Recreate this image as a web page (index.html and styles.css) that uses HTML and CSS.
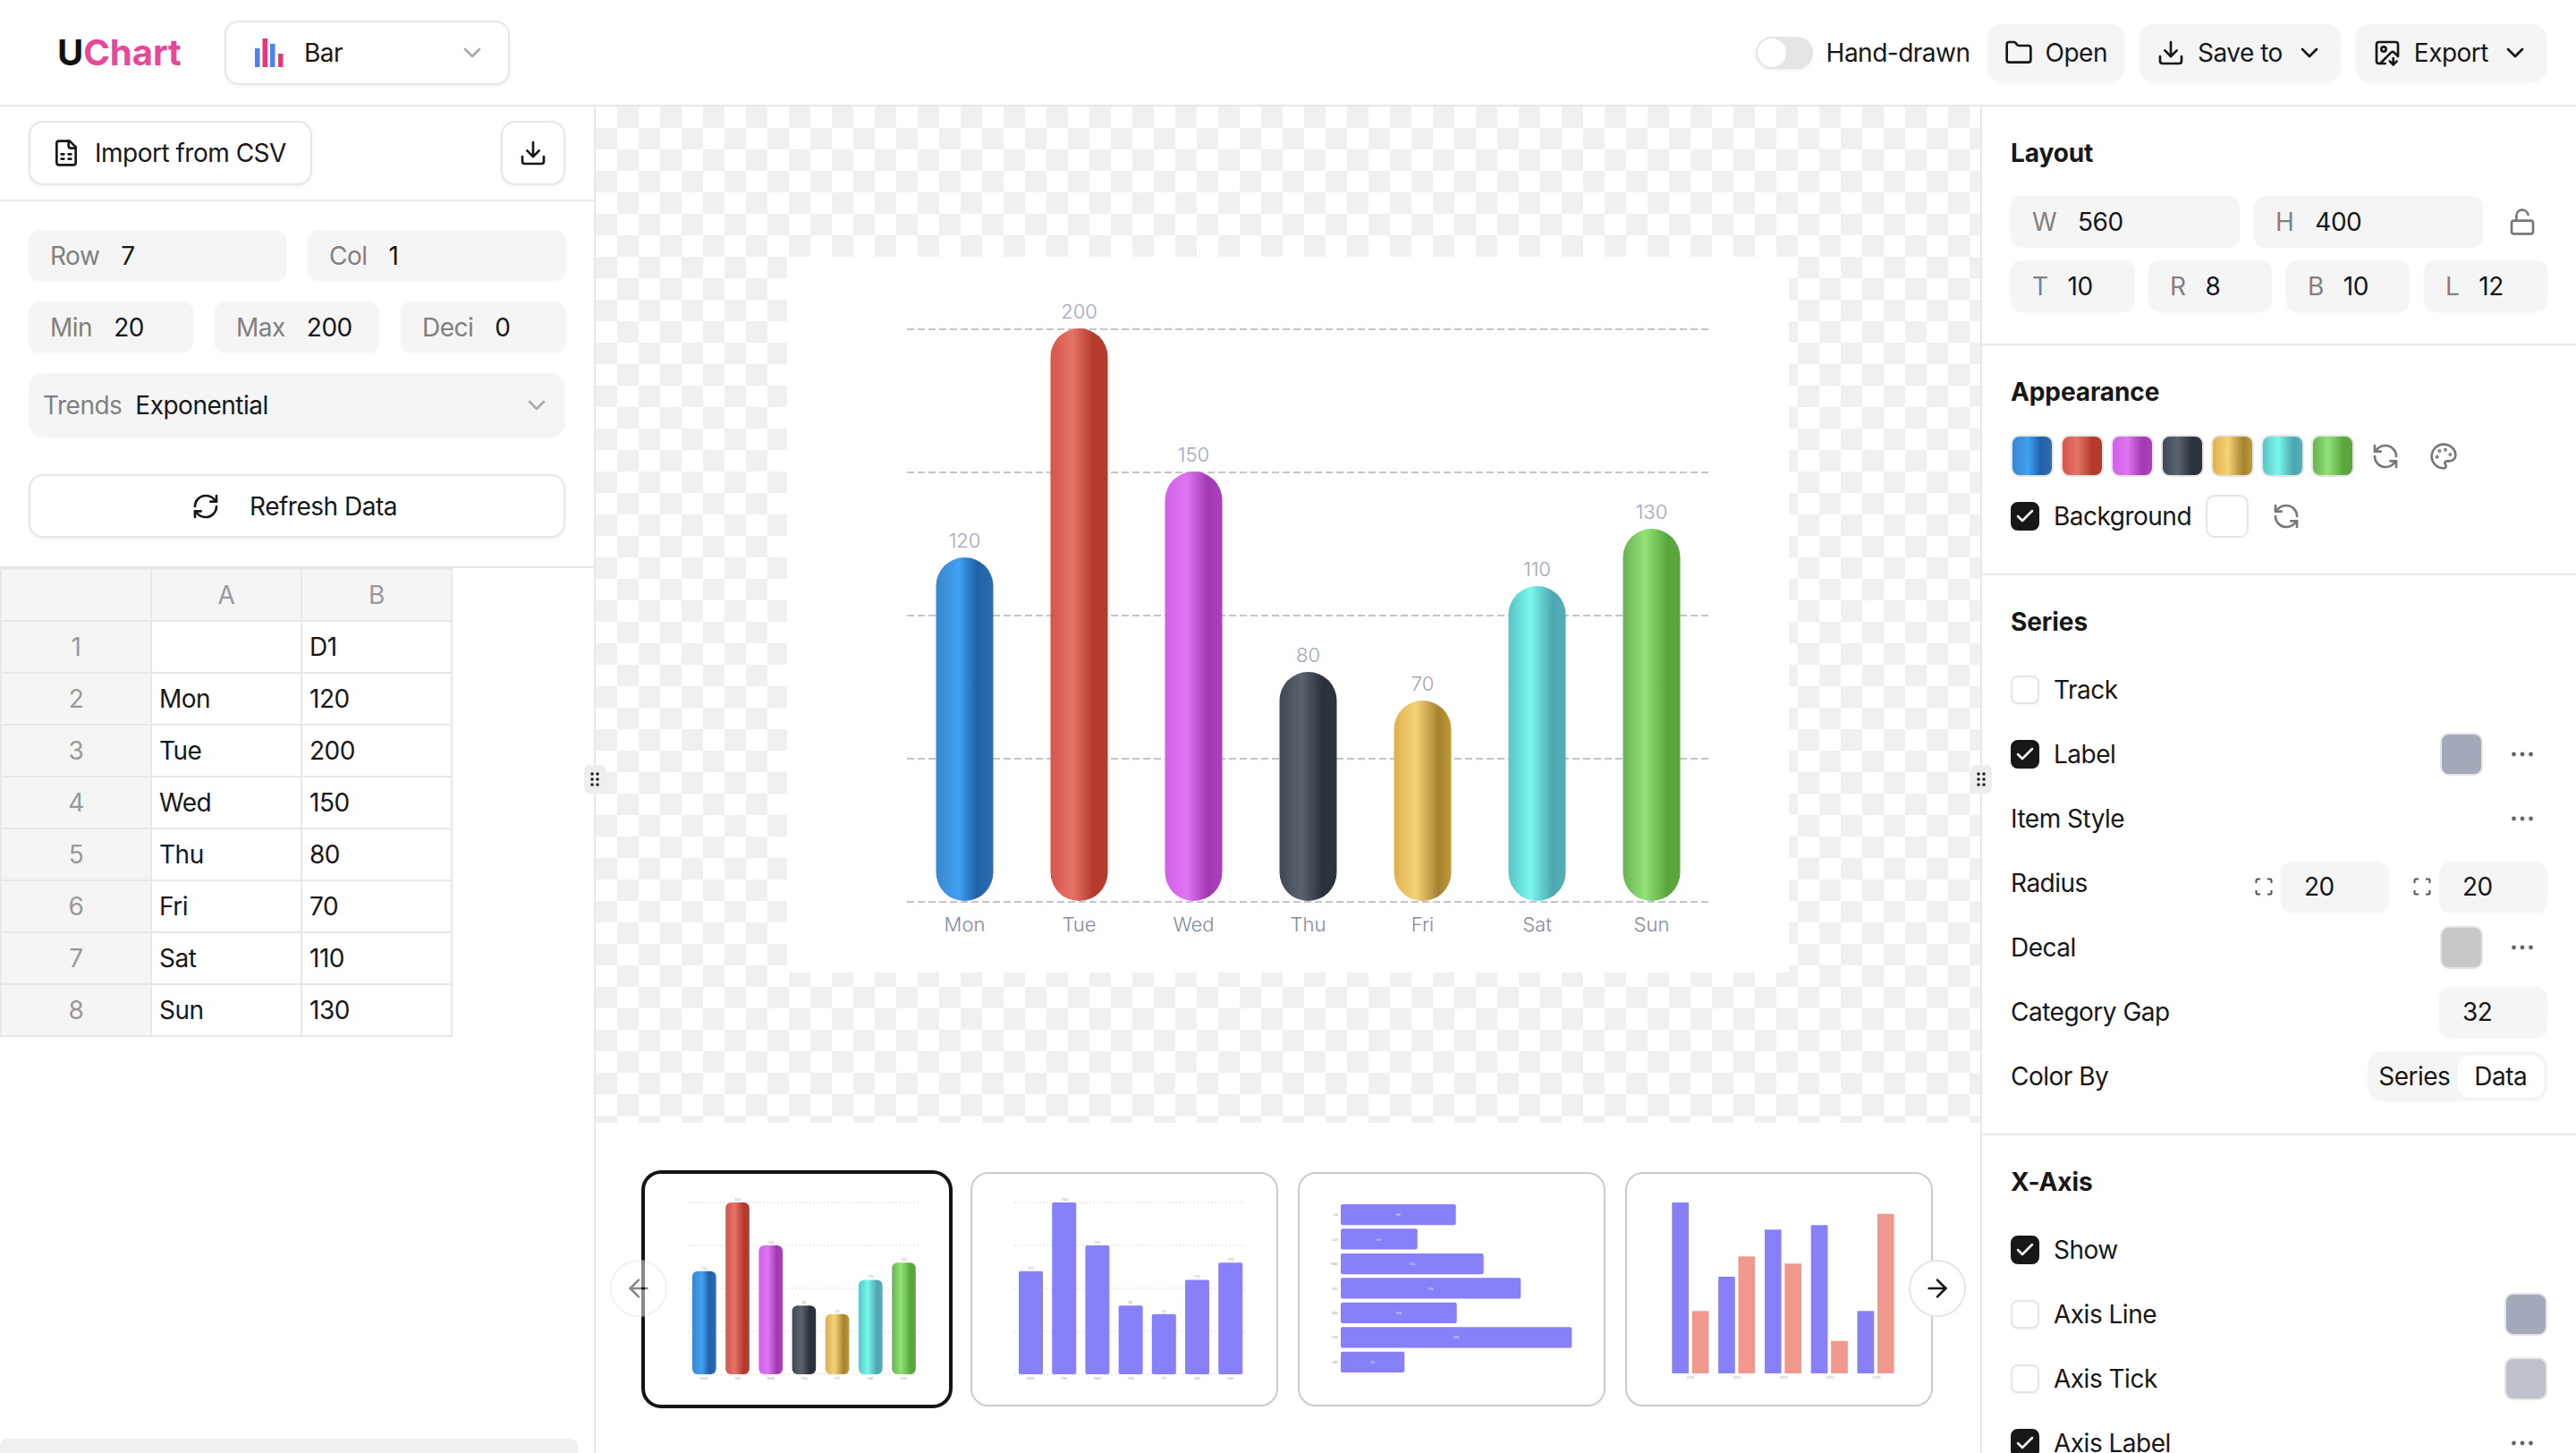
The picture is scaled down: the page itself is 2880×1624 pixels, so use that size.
FILE: index.html
```html
<!DOCTYPE html>
<html lang="en">
<head>
    <meta charset="UTF-8">
    <meta name="viewport" content="width=device-width, initial-scale=1.0">
    <title>UChart</title>
    <link rel="stylesheet" href="styles.css">
</head>
<body>
    <!-- Shared bar gradients -->
    <svg class="defs" width="0" height="0">
        <defs>
            <linearGradient id="g-blue"><stop offset="0" stop-color="#3a86d0"/><stop offset=".4" stop-color="#40a0f2"/><stop offset=".72" stop-color="#2060a8"/><stop offset="1" stop-color="#2c6eb0"/></linearGradient>
            <linearGradient id="g-red"><stop offset="0" stop-color="#d5544a"/><stop offset=".38" stop-color="#e57468"/><stop offset=".75" stop-color="#b43a2c"/><stop offset="1" stop-color="#b83a2d"/></linearGradient>
            <linearGradient id="g-purple"><stop offset="0" stop-color="#d062e6"/><stop offset=".38" stop-color="#df74f3"/><stop offset=".75" stop-color="#a03ab0"/><stop offset="1" stop-color="#ae3fc0"/></linearGradient>
            <linearGradient id="g-dark"><stop offset="0" stop-color="#3f4854"/><stop offset=".38" stop-color="#5b636f"/><stop offset=".75" stop-color="#2a313a"/><stop offset="1" stop-color="#2e343d"/></linearGradient>
            <linearGradient id="g-gold"><stop offset="0" stop-color="#deb04e"/><stop offset=".38" stop-color="#f6d277"/><stop offset=".78" stop-color="#a58230"/><stop offset="1" stop-color="#c09b38"/></linearGradient>
            <linearGradient id="g-teal"><stop offset="0" stop-color="#5ac3c6"/><stop offset=".38" stop-color="#7af8ec"/><stop offset=".78" stop-color="#4da5b0"/><stop offset="1" stop-color="#52b0b8"/></linearGradient>
            <linearGradient id="g-green"><stop offset="0" stop-color="#6ab055"/><stop offset=".38" stop-color="#92e277"/><stop offset=".78" stop-color="#58a53c"/><stop offset="1" stop-color="#5aa83c"/></linearGradient>
        </defs>
    </svg>

    <div class="app">
        <!-- Top bar -->
        <header class="topbar">
            <div class="logo">U<span>Chart</span></div>
            <div class="type-select">
                <svg class="bar-icon" viewBox="0 0 32 32" width="32" height="32">
                    <rect x="0" y="11" width="5.5" height="21" fill="#4f7ff0"/>
                    <rect x="8.5" y="0" width="5.5" height="32" fill="#e8357a"/>
                    <rect x="17" y="6" width="5.5" height="26" fill="#4f7ff0"/>
                    <rect x="26" y="17" width="5.5" height="15" fill="#e8357a"/>
                </svg>
                <span>Bar</span>
                <svg class="icon chevron muted" viewBox="0 0 24 24"><path d="m6 9 6 6 6-6"/></svg>
            </div>

            <div class="topbar-actions">
                <div class="toggle"><span class="knob"></span></div>
                <span class="toggle-label">Hand-drawn</span>
                <button class="action">
                    <svg class="icon" viewBox="0 0 24 24"><path d="M20 20a2 2 0 0 0 2-2V8a2 2 0 0 0-2-2h-7.9a2 2 0 0 1-1.69-.9L9.6 3.9A2 2 0 0 0 7.93 3H4a2 2 0 0 0-2 2v13a2 2 0 0 0 2 2Z"/></svg>
                    Open
                </button>
                <button class="action">
                    <svg class="icon" viewBox="0 0 24 24"><path d="M21 15v4a2 2 0 0 1-2 2H5a2 2 0 0 1-2-2v-4"/><path d="m7 10 5 5 5-5"/><path d="M12 15V3"/></svg>
                    Save to
                    <svg class="icon chevron" viewBox="0 0 24 24"><path d="m6 9 6 6 6-6"/></svg>
                </button>
                <button class="action">
                    <svg class="icon" viewBox="0 0 24 24"><path d="M10.3 21H5a2 2 0 0 1-2-2V5a2 2 0 0 1 2-2h14a2 2 0 0 1 2 2v10l-3.1-3.1a2 2 0 0 0-2.814.014L6 21"/><path d="m14 19 3 3v-5.5"/><path d="m17 22 3-3"/><circle cx="9" cy="9" r="2"/></svg>
                    Export
                    <svg class="icon chevron" viewBox="0 0 24 24"><path d="m6 9 6 6 6-6"/></svg>
                </button>
            </div>
        </header>

        <div class="workspace">
            <!-- Data panel -->
            <aside class="data-panel">
                <div class="import-row">
                    <button class="outline-btn">
                        <svg class="icon" viewBox="0 0 24 24"><path d="M15 2H6a2 2 0 0 0-2 2v16a2 2 0 0 0 2 2h12a2 2 0 0 0 2-2V7Z"/><path d="M14 2v4a2 2 0 0 0 2 2h4"/><path d="M8 13h2"/><path d="M14 13h2"/><path d="M8 17h2"/><path d="M14 17h2"/></svg>
                        Import from CSV
                    </button>
                    <button class="outline-btn square">
                        <svg class="icon" viewBox="0 0 24 24"><path d="M21 15v4a2 2 0 0 1-2 2H5a2 2 0 0 1-2-2v-4"/><path d="m7 10 5 5 5-5"/><path d="M12 15V3"/></svg>
                    </button>
                </div>

                <div class="generator">
                    <div class="field-row">
                        <div class="field"><label>Row</label><span>7</span></div>
                        <div class="field"><label>Col</label><span>1</span></div>
                    </div>
                    <div class="field-row">
                        <div class="field"><label>Min</label><span>20</span></div>
                        <div class="field"><label>Max</label><span>200</span></div>
                        <div class="field"><label>Deci</label><span>0</span></div>
                    </div>
                    <div class="trends">
                        <label>Trends</label><span>Exponential</span>
                        <svg class="icon chevron muted" viewBox="0 0 24 24"><path d="m6 9 6 6 6-6"/></svg>
                    </div>
                    <button class="outline-btn refresh">
                        <svg class="icon" viewBox="0 0 24 24"><path d="M3 12a9 9 0 0 1 9-9 9.75 9.75 0 0 1 6.74 2.74L21 8"/><path d="M21 3v5h-5"/><path d="M21 12a9 9 0 0 1-9 9 9.75 9.75 0 0 1-6.74-2.74L3 16"/><path d="M8 16H3v5"/></svg>
                        Refresh Data
                    </button>
                </div>

                <table class="sheet">
                    <tr><th></th><th>A</th><th>B</th></tr>
                    <tr><th>1</th><td></td><td>D1</td></tr>
                    <tr><th>2</th><td>Mon</td><td>120</td></tr>
                    <tr><th>3</th><td>Tue</td><td>200</td></tr>
                    <tr><th>4</th><td>Wed</td><td>150</td></tr>
                    <tr><th>5</th><td>Thu</td><td>80</td></tr>
                    <tr><th>6</th><td>Fri</td><td>70</td></tr>
                    <tr><th>7</th><td>Sat</td><td>110</td></tr>
                    <tr><th>8</th><td>Sun</td><td>130</td></tr>
                </table>

                <div class="sheet-scroll"></div>
                <div class="grip"><svg viewBox="0 0 12 20" width="12" height="20"><circle cx="3" cy="4" r="1.8"/><circle cx="9" cy="4" r="1.8"/><circle cx="3" cy="10" r="1.8"/><circle cx="9" cy="10" r="1.8"/><circle cx="3" cy="16" r="1.8"/><circle cx="9" cy="16" r="1.8"/></svg></div>
            </aside>

            <!-- Canvas and chart templates -->
            <main class="stage">
                <div class="canvas">
                    <div class="chart-card">
                        <svg viewBox="0 0 1120 800" width="1120" height="800">
                            <g class="grid-line">
                                <line x1="134" y1="81" x2="1031" y2="81"/>
                                <line x1="134" y1="241" x2="1031" y2="241"/>
                                <line x1="134" y1="401" x2="1031" y2="401"/>
                                <line x1="134" y1="561" x2="1031" y2="561"/>
                                <line x1="134" y1="721" x2="1031" y2="721"/>
                            </g>
                            <rect x="166.5" y="336" width="64" height="384" rx="32" fill="url(#g-blue)"/>
                            <rect x="294.5" y="80" width="64" height="640" rx="32" fill="url(#g-red)"/>
                            <rect x="422.5" y="240" width="64" height="480" rx="32" fill="url(#g-purple)"/>
                            <rect x="550.5" y="464" width="64" height="256" rx="32" fill="url(#g-dark)"/>
                            <rect x="678.5" y="496" width="64" height="224" rx="32" fill="url(#g-gold)"/>
                            <rect x="806.5" y="368" width="64" height="352" rx="32" fill="url(#g-teal)"/>
                            <rect x="934.5" y="304" width="64" height="416" rx="32" fill="url(#g-green)"/>
                            <g class="value-label">
                                <text x="198.500" y="325">120</text>
                                <text x="326.500" y="69">200</text>
                                <text x="454.500" y="229">150</text>
                                <text x="582.500" y="453">80</text>
                                <text x="710.500" y="485">70</text>
                                <text x="838.500" y="357">110</text>
                                <text x="966.500" y="293">130</text>
                            </g>
                            <g class="axis-label">
                                <text x="198.500" y="754">Mon</text>
                                <text x="326.500" y="754">Tue</text>
                                <text x="454.500" y="754">Wed</text>
                                <text x="582.500" y="754">Thu</text>
                                <text x="710.500" y="754">Fri</text>
                                <text x="838.500" y="754">Sat</text>
                                <text x="966.500" y="754">Sun</text>
                            </g>
                        </svg>
                    </div>
                </div>

                <div class="templates">
                    <div class="thumb active">
                        <svg viewBox="2 2 340 258" width="340" height="258">
                            <g class="thumb-grid">
                                <line x1="50" y1="34" x2="309" y2="34"/><line x1="50" y1="82" x2="309" y2="82"/><line x1="50" y1="130" x2="309" y2="130"/><line x1="50" y1="178" x2="309" y2="178"/><line x1="50" y1="226" x2="309" y2="226"/>
                            </g>
                            <rect x="55" y="110.8" width="26.6" height="115.2" rx="6" fill="url(#g-blue)"/>
                            <rect x="92.2" y="34" width="26.6" height="192" rx="6" fill="url(#g-red)"/>
                            <rect x="129.4" y="82" width="26.6" height="144" rx="6" fill="url(#g-purple)"/>
                            <rect x="166.6" y="149.2" width="26.6" height="76.8" rx="6" fill="url(#g-dark)"/>
                            <rect x="203.8" y="158.8" width="26.6" height="67.2" rx="6" fill="url(#g-gold)"/>
                            <rect x="241" y="120.4" width="26.6" height="105.6" rx="6" fill="url(#g-teal)"/>
                            <rect x="278.2" y="101.2" width="26.6" height="124.8" rx="6" fill="url(#g-green)"/>
                            <g class="thumb-label">
                                <text x="68.3" y="108.5">120</text><text x="105.5" y="32">200</text><text x="142.7" y="80">150</text><text x="179.9" y="147">80</text><text x="217.1" y="156.5">70</text><text x="254.3" y="118">110</text><text x="291.5" y="99">130</text>
                                <text x="68.3" y="232">Mon</text><text x="105.5" y="232">Tue</text><text x="142.7" y="232">Wed</text><text x="179.9" y="232">Thu</text><text x="217.1" y="232">Fri</text><text x="254.3" y="232">Sat</text><text x="291.5" y="232">Sun</text>
                            </g>
                        </svg>
                    </div>
                    <div class="thumb">
                        <svg viewBox="2 2 340 258" width="340" height="258">
                            <g class="thumb-grid">
                                <line x1="49" y1="34" x2="309" y2="34"/><line x1="49" y1="82" x2="309" y2="82"/><line x1="49" y1="130" x2="309" y2="130"/><line x1="49" y1="178" x2="309" y2="178"/><line x1="49" y1="226" x2="309" y2="226"/>
                            </g>
                            <g class="violet">
                                <rect x="54" y="110.8" width="27" height="115.2" rx="2"/>
                                <rect x="91.2" y="34" width="27" height="192" rx="2"/>
                                <rect x="128.4" y="82" width="27" height="144" rx="2"/>
                                <rect x="165.6" y="149.2" width="27" height="76.8" rx="2"/>
                                <rect x="202.8" y="158.8" width="27" height="67.2" rx="2"/>
                                <rect x="240" y="120.4" width="27" height="105.6" rx="2"/>
                                <rect x="277.2" y="101.2" width="27" height="124.8" rx="2"/>
                            </g>
                            <g class="thumb-label">
                                <text x="67.5" y="108.5">120</text><text x="104.7" y="32">200</text><text x="141.9" y="80">150</text><text x="179.1" y="147">80</text><text x="216.3" y="156.5">70</text><text x="253.5" y="118">110</text><text x="290.7" y="99">130</text>
                                <text x="67.5" y="232">Mon</text><text x="104.7" y="232">Tue</text><text x="141.9" y="232">Wed</text><text x="179.1" y="232">Thu</text><text x="216.3" y="232">Fri</text><text x="253.5" y="232">Sat</text><text x="290.7" y="232">Sun</text>
                            </g>
                        </svg>
                    </div>
                    <div class="thumb">
                        <svg viewBox="2 2 340 258" width="340" height="258">
                            <g class="violet">
                                <rect x="48" y="36" width="128.7" height="23.3" rx="2"/>
                                <rect x="48" y="63.3" width="85.7" height="23.3" rx="2"/>
                                <rect x="48" y="91" width="159.7" height="23.3" rx="2"/>
                                <rect x="48" y="118.3" width="201.3" height="23.3" rx="2"/>
                                <rect x="48" y="145.7" width="129.7" height="23.3" rx="2"/>
                                <rect x="48" y="173.3" width="258.3" height="23.3" rx="2"/>
                                <rect x="48" y="200.7" width="71.3" height="23.3" rx="2"/>
                            </g>
                            <g class="thumb-label row-label">
                                <text x="45" y="49">Jul</text><text x="45" y="76.500">Jun</text><text x="45" y="104">May</text><text x="45" y="131.500">Apr</text><text x="45" y="159">Mar</text><text x="45" y="186">Feb</text><text x="45" y="213.500">Jan</text>
                            </g>
                            <g class="thumb-label inner-label">
                                <text x="112" y="49">99</text><text x="90.500" y="76.500">66</text><text x="128" y="104">123</text><text x="148.500" y="131.500">155</text><text x="113" y="159">100</text><text x="177" y="186">199</text><text x="83.500" y="213.500">55</text>
                            </g>
                        </svg>
                    </div>
                    <div class="thumb">
                        <svg viewBox="2 2 340 258" width="340" height="258">
                            <g class="violet">
                                <rect x="52.3" y="34" width="18.7" height="191"/>
                                <rect x="104.1" y="117" width="18.7" height="108"/>
                                <rect x="155.9" y="64.3" width="18.7" height="160.7"/>
                                <rect x="207.7" y="59.3" width="18.7" height="165.7"/>
                                <rect x="259.5" y="155.3" width="18.7" height="69.7"/>
                            </g>
                            <g class="salmon">
                                <rect x="74.7" y="155.3" width="18.7" height="69.7"/>
                                <rect x="126.5" y="94.3" width="18.7" height="130.7"/>
                                <rect x="178.3" y="102.3" width="18.7" height="122.7"/>
                                <rect x="230.1" y="188.7" width="18.7" height="36.3"/>
                                <rect x="281.9" y="46.7" width="18.7" height="178.3"/>
                            </g>
                            <g class="thumb-label">
                                <text x="73" y="231">2012</text><text x="125" y="231">2013</text><text x="177" y="231">2014</text><text x="229" y="231">2015</text><text x="281" y="231">2016</text>
                            </g>
                        </svg>
                    </div>
                    <button class="nav-btn prev">
                        <svg class="icon" viewBox="0 0 24 24"><path d="m12 19-7-7 7-7"/><path d="M19 12H5"/></svg>
                    </button>
                    <button class="nav-btn next">
                        <svg class="icon" viewBox="0 0 24 24"><path d="M5 12h14"/><path d="m12 5 7 7-7 7"/></svg>
                    </button>
                </div>
            </main>

            <!-- Settings panel -->
            <aside class="settings">
                <div class="grip"><svg viewBox="0 0 12 20" width="12" height="20"><circle cx="3" cy="4" r="1.8"/><circle cx="9" cy="4" r="1.8"/><circle cx="3" cy="10" r="1.8"/><circle cx="9" cy="10" r="1.8"/><circle cx="3" cy="16" r="1.8"/><circle cx="9" cy="16" r="1.8"/></svg></div>

                <section class="group">
                    <h2>Layout</h2>
                    <div class="size-row">
                        <div class="field"><label>W</label><span>560</span></div>
                        <div class="field"><label>H</label><span>400</span></div>
                        <svg class="icon gray" viewBox="0 0 24 24"><rect x="3" y="11" width="18" height="11" rx="2"/><path d="M7 11V7a5 5 0 0 1 9.9-1"/></svg>
                    </div>
                    <div class="field-row padding-row">
                        <div class="field"><label>T</label><span>10</span></div>
                        <div class="field"><label>R</label><span>8</span></div>
                        <div class="field"><label>B</label><span>10</span></div>
                        <div class="field"><label>L</label><span>12</span></div>
                    </div>
                </section>

                <section class="group">
                    <h2>Appearance</h2>
                    <div class="palette">
                        <span class="swatch s-blue"></span>
                        <span class="swatch s-red"></span>
                        <span class="swatch s-purple"></span>
                        <span class="swatch s-dark"></span>
                        <span class="swatch s-gold"></span>
                        <span class="swatch s-teal"></span>
                        <span class="swatch s-green"></span>
                        <svg class="icon gray palette-refresh" viewBox="0 0 24 24"><path d="M21 12a9 9 0 0 0-9-9 9.75 9.75 0 0 0-6.74 2.74L3 8"/><path d="M3 3v5h5"/><path d="M3 12a9 9 0 0 0 9 9 9.75 9.75 0 0 0 6.74-2.74L21 16"/><path d="M16 16h5v5"/></svg>
                        <svg class="icon gray palette-pick" viewBox="0 0 24 24"><path d="M12 22a1 1 0 0 1 0-20 10 9 0 0 1 10 9 5 5 0 0 1-5 5h-2.25a1.75 1.75 0 0 0-1.4 2.8l.3.4a1.75 1.75 0 0 1-1.4 2.8z"/><circle cx="13.5" cy="6.5" r=".5" fill="currentColor"/><circle cx="17.5" cy="10.5" r=".5" fill="currentColor"/><circle cx="6.5" cy="12.5" r=".5" fill="currentColor"/><circle cx="8.5" cy="7.5" r=".5" fill="currentColor"/></svg>
                    </div>
                    <div class="background-row">
                        <span class="check on"><svg viewBox="0 0 24 24"><path d="M20 6 9 17l-5-5"/></svg></span>
                        <span>Background</span>
                        <span class="color-box blank"></span>
                        <svg class="icon gray" viewBox="0 0 24 24"><path d="M21 12a9 9 0 0 0-9-9 9.75 9.75 0 0 0-6.74 2.74L3 8"/><path d="M3 3v5h5"/><path d="M3 12a9 9 0 0 0 9 9 9.75 9.75 0 0 0 6.74-2.74L21 16"/><path d="M16 16h5v5"/></svg>
                    </div>
                </section>

                <section class="group">
                    <h2>Series</h2>
                    <div class="rows">
                        <div class="row"><span class="check"></span><span>Track</span></div>
                        <div class="row">
                            <span class="check on"><svg viewBox="0 0 24 24"><path d="M20 6 9 17l-5-5"/></svg></span><span>Label</span>
                            <span class="color-box slate push"></span>
                            <svg class="dots" viewBox="0 0 32 32"><circle cx="6.500" cy="16" r="2.400"/><circle cx="16" cy="16" r="2.400"/><circle cx="25.500" cy="16" r="2.400"/></svg>
                        </div>
                        <div class="row">
                            <span>Item Style</span>
                            <svg class="dots push" viewBox="0 0 32 32"><circle cx="6.500" cy="16" r="2.400"/><circle cx="16" cy="16" r="2.400"/><circle cx="25.500" cy="16" r="2.400"/></svg>
                        </div>
                        <div class="row">
                            <span>Radius</span>
                            <div class="radius-fields">
                                <svg class="corners" viewBox="0 0 20 20"><path d="M1.5 6V3a1.5 1.5 0 0 1 1.5-1.5h3M14 1.500h3A1.500 1.500 0 0 1 18.500 3v3M18.500 14v3a1.500 1.500 0 0 1-1.500 1.500h-3M6 18.500H3A1.500 1.500 0 0 1 1.500 17v-3"/></svg>
                                <div class="num-field">20</div>
                                <svg class="corners" viewBox="0 0 20 20"><path d="M1.5 6V3a1.5 1.5 0 0 1 1.5-1.5h3M14 1.500h3A1.500 1.500 0 0 1 18.500 3v3M18.500 14v3a1.500 1.500 0 0 1-1.500 1.500h-3M6 18.500H3A1.500 1.500 0 0 1 1.500 17v-3"/></svg>
                                <div class="num-field">20</div>
                            </div>
                        </div>
                        <div class="row">
                            <span>Decal</span>
                            <span class="color-box stone push"></span>
                            <svg class="dots" viewBox="0 0 32 32"><circle cx="6.500" cy="16" r="2.400"/><circle cx="16" cy="16" r="2.400"/><circle cx="25.500" cy="16" r="2.400"/></svg>
                        </div>
                        <div class="row"><span>Category Gap</span><div class="num-field push">32</div></div>
                        <div class="row">
                            <span>Color By</span>
                            <div class="segmented push"><span>Series</span><span class="selected">Data</span></div>
                        </div>
                    </div>
                </section>

                <section class="group">
                    <h2>X-Axis</h2>
                    <div class="rows">
                        <div class="row"><span class="check on"><svg viewBox="0 0 24 24"><path d="M20 6 9 17l-5-5"/></svg></span><span>Show</span></div>
                        <div class="row"><span class="check"></span><span>Axis Line</span><span class="color-box slate push"></span></div>
                        <div class="row"><span class="check"></span><span>Axis Tick</span><span class="color-box mist push"></span></div>
                        <div class="row">
                            <span class="check on"><svg viewBox="0 0 24 24"><path d="M20 6 9 17l-5-5"/></svg></span><span>Axis Label</span>
                            <svg class="dots push" viewBox="0 0 32 32"><circle cx="6.500" cy="16" r="2.400"/><circle cx="16" cy="16" r="2.400"/><circle cx="25.500" cy="16" r="2.400"/></svg>
                        </div>
                    </div>
                </section>
            </aside>
        </div>
    </div>
</body>
</html>
```

FILE: styles.css
```css
/* Reset */
* {
    margin: 0;
    padding: 0;
    box-sizing: border-box;
}

body {
    font-family: Inter, "Liberation Sans", sans-serif;
    font-size: 28px;
    letter-spacing: -0.5px;
    color: #171717;
    background-color: #fff;
    overflow: hidden;
}

button {
    font: inherit;
    letter-spacing: inherit;
    color: inherit;
    background: none;
    border: none;
}

label {
    color: #808080;
}

.defs {
    position: absolute;
}

.app {
    display: flex;
    flex-direction: column;
    height: 100vh;
}

/* Icons */
.icon {
    width: 32px;
    height: 32px;
    flex-shrink: 0;
    fill: none;
    stroke: currentColor;
    stroke-width: 2;
    stroke-linecap: round;
    stroke-linejoin: round;
}

.icon.gray {
    color: #777;
}

.icon.muted {
    color: #aaa;
}

/* Top bar */
.topbar {
    display: flex;
    align-items: center;
    height: 119px;
    flex-shrink: 0;
    padding: 0 33px 0 64px;
    border-bottom: 2px solid #e8e8e8;
}

.logo {
    width: 136px;
    margin-right: 51px;
    font-size: 40px;
    font-weight: 700;
    letter-spacing: 0;
    color: #111;
}

.logo span {
    color: #e8479a;
}

.type-select {
    display: flex;
    align-items: center;
    width: 319px;
    height: 72px;
    padding: 0 24px 0 32px;
    background-color: #fff;
    border: 2px solid #e6e6e6;
    border-radius: 16px;
    box-shadow: 0 2px 4px rgba(0, 0, 0, 0.05);
}

.type-select .bar-icon {
    margin-right: 23px;
}

.type-select .chevron {
    margin-left: auto;
}

.topbar-actions {
    display: flex;
    align-items: center;
    margin-left: auto;
}

.toggle {
    width: 64px;
    height: 36px;
    padding: 2px;
    margin-right: 15px;
    background-color: #e5e5e5;
    border-radius: 18px;
    box-shadow: 0 1px 3px rgba(0, 0, 0, 0.08);
}

.knob {
    display: block;
    width: 32px;
    height: 32px;
    background-color: #fff;
    border-radius: 50%;
}

.toggle-label {
    margin-right: 19px;
}

.action {
    display: flex;
    align-items: center;
    gap: 14px;
    height: 64px;
    padding: 0 19px;
    margin-right: 17px;
    background-color: #f5f5f5;
    border-radius: 16px;
    box-shadow: 0 2px 4px rgba(0, 0, 0, 0.04);
}

.action:last-child {
    margin-right: 0;
}

/* Workspace */
.workspace {
    display: flex;
    flex: 1;
    min-height: 0;
}

/* Data panel */
.data-panel {
    position: relative;
    display: flex;
    flex-direction: column;
    width: 666px;
    flex-shrink: 0;
    border-right: 2px solid #e8e8e8;
}

.import-row {
    display: flex;
    align-items: center;
    justify-content: space-between;
    height: 106px;
    flex-shrink: 0;
    padding: 0 32px;
    border-bottom: 2px solid #e8e8e8;
}

.outline-btn {
    display: flex;
    align-items: center;
    gap: 16px;
    height: 72px;
    padding: 0 27px 0 24px;
    background-color: #fff;
    border: 2px solid #e6e6e6;
    border-radius: 16px;
    box-shadow: 0 2px 4px rgba(0, 0, 0, 0.05);
}

.outline-btn.square {
    justify-content: center;
    width: 72px;
    padding: 0;
}

.generator {
    display: flex;
    flex-direction: column;
    height: 410px;
    flex-shrink: 0;
    padding: 32px 32px 0;
    border-bottom: 2px solid #e8e8e8;
}

.field-row {
    display: flex;
    gap: 24px;
    margin-bottom: 23px;
}

.field {
    display: flex;
    align-items: center;
    flex: 1;
    gap: 24px;
    height: 57px;
    padding: 0 24px;
    background-color: #f5f5f5;
    border-radius: 12px;
    box-shadow: 0 1px 3px rgba(0, 0, 0, 0.04);
}

.trends {
    display: flex;
    align-items: center;
    gap: 15px;
    height: 72px;
    padding: 0 16px;
    background-color: #f5f5f5;
    border-radius: 16px;
}

.trends .chevron {
    margin-left: auto;
}

.refresh {
    justify-content: center;
    gap: 33px;
    width: 100%;
    height: 71px;
    padding: 0 6px 0 0;
    margin-top: 41px;
}

/* Spreadsheet */
.sheet {
    width: 506px;
    border-collapse: collapse;
    table-layout: fixed;
}

.sheet th,
.sheet td {
    height: 58px;
    border: 2px solid #e8e8e8;
    font-weight: 400;
}

.sheet th {
    color: #999;
    background-color: #f5f5f5;
}

.sheet td {
    padding-left: 8px;
}

.sheet-scroll {
    width: 646px;
    height: 16px;
    margin-top: auto;
    background-color: #f0f0f0;
    border-radius: 8px 8px 0 0;
}

.grip {
    position: absolute;
    top: 736px;
    right: -13px;
    z-index: 2;
    display: flex;
    align-items: center;
    justify-content: center;
    width: 24px;
    height: 32px;
    background-color: #eee;
    border-radius: 6px;
}

.grip circle {
    fill: #222;
}

/* Canvas */
.stage {
    display: flex;
    flex-direction: column;
    flex: 1;
    min-width: 0;
}

.canvas {
    display: flex;
    align-items: center;
    justify-content: center;
    height: 1136px;
    flex-shrink: 0;
    background: repeating-conic-gradient(#f0f0f0 0 25%, #fff 0 50%) 0 0 / 48px 48px;
}

.chart-card {
    width: 1120px;
    height: 800px;
    background-color: #fff;
}

.chart-card svg,
.thumb svg {
    display: block;
}

.grid-line line {
    stroke: #c4c4cf;
    stroke-width: 2;
    stroke-dasharray: 8 4;
}

.value-label text,
.axis-label text {
    font-size: 22px;
    font-weight: 300;
    letter-spacing: 0;
    text-anchor: middle;
}

.value-label text {
    fill: #a0a6bc;
}

.axis-label text {
    fill: #858a9f;
}

/* Template strip */
.templates {
    position: relative;
    display: flex;
    justify-content: center;
    gap: 22px;
    flex: 1;
    padding-top: 55px;
}

.thumb {
    width: 344px;
    height: 262px;
    background-color: #fff;
    border: 2px solid #ccc;
    border-radius: 20px;
    overflow: hidden;
}

.thumb.active {
    border-color: #141414;
    box-shadow: 0 0 0 2px #141414;
}

.thumb-grid line {
    stroke: #ddd;
    stroke-width: 1;
    stroke-dasharray: 2 2;
}

.thumb-label text {
    font-size: 4px;
    letter-spacing: 0;
    fill: #aaa;
    text-anchor: middle;
}

.thumb-label.row-label text {
    text-anchor: end;
}

.thumb-label.inner-label text {
    fill: #e4e2ff;
}

.violet rect {
    fill: #8780f8;
}

.salmon rect {
    fill: #f2978d;
}

.nav-btn {
    position: absolute;
    top: 153px;
    display: flex;
    align-items: center;
    justify-content: center;
    width: 64px;
    height: 64px;
    background-color: #fff;
    border: 2px solid #e6e6e6;
    border-radius: 50%;
}

.nav-btn.prev {
    left: 16px;
    opacity: 0.5;
}

.nav-btn.next {
    right: 16px;
}

/* Settings panel */
.settings {
    position: relative;
    width: 666px;
    flex-shrink: 0;
    border-left: 2px solid #e8e8e8;
}

.settings .grip {
    right: auto;
    left: -13px;
}

.group {
    padding: 32px 32px 36px;
    border-bottom: 2px solid #e8e8e8;
}

h2 {
    height: 40px;
    margin-bottom: 28px;
    font-size: 28px;
    line-height: 40px;
    font-weight: 700;
    letter-spacing: -0.1px;
}

.size-row {
    display: flex;
    align-items: center;
    gap: 16px;
    margin-bottom: 15px;
}

.size-row .field {
    flex: none;
    width: 256px;
}

.size-row .icon {
    margin-left: 12px;
}

.padding-row {
    gap: 16px;
    margin-bottom: 0;
}

.padding-row .field {
    padding: 0 24px;
    gap: 22px;
}

.palette {
    display: flex;
    align-items: center;
    gap: 8px;
}

.swatch {
    width: 48px;
    height: 47px;
    border: 2px solid #e5e5e5;
    border-radius: 10px;
}

.s-blue { background: linear-gradient(90deg, #3a86d0, #40a0f2 40%, #2060a8 72%, #2c6eb0); }
.s-red { background: linear-gradient(90deg, #d5544a, #e57468 38%, #b43a2c 75%, #b83a2d); }
.s-purple { background: linear-gradient(90deg, #d062e6, #df74f3 38%, #a03ab0 75%, #ae3fc0); }
.s-dark { background: linear-gradient(90deg, #3f4854, #5b636f 38%, #2a313a 75%, #2e343d); }
.s-gold { background: linear-gradient(90deg, #deb04e, #f6d277 38%, #a58230 78%, #c09b38); }
.s-teal { background: linear-gradient(90deg, #5ac3c6, #7af8ec 38%, #4da5b0 78%, #52b0b8); }
.s-green { background: linear-gradient(90deg, #6ab055, #92e277 38%, #58a53c 78%, #5aa83c); }

.palette-refresh {
    margin-left: 11px;
}

.palette-pick {
    margin-left: 25px;
}

.background-row {
    display: flex;
    align-items: center;
    height: 56px;
    margin-top: 16px;
    gap: 16px;
}

.background-row .icon {
    margin-left: 10px;
}

.rows {
    display: flex;
    flex-direction: column;
    gap: 16px;
}

.row {
    display: flex;
    align-items: center;
    gap: 16px;
    height: 56px;
}

.push {
    margin-left: auto;
}

.check {
    display: flex;
    align-items: center;
    justify-content: center;
    width: 32px;
    height: 32px;
    flex-shrink: 0;
    background-color: #fff;
    border: 2px solid #e5e5e5;
    border-radius: 8px;
    box-shadow: 0 1px 2px rgba(0, 0, 0, 0.05);
}

.check.on {
    background-color: #171717;
    border-color: #171717;
}

.check svg {
    width: 24px;
    height: 24px;
    fill: none;
    stroke: #fff;
    stroke-width: 2.5;
    stroke-linecap: round;
    stroke-linejoin: round;
}

.color-box {
    width: 48px;
    height: 48px;
    flex-shrink: 0;
    border: 2px solid #e5e5e5;
    border-radius: 10px;
}

.color-box.blank {
    background-color: #fff;
}

.color-box.slate {
    background-color: #a3a9ba;
}

.color-box.stone {
    background-color: #c8c8c8;
}

.color-box.mist {
    background-color: #bfc2cb;
}

.dots {
    width: 32px;
    height: 32px;
    margin-left: 12px;
    margin-right: 12px;
    flex-shrink: 0;
}

.dots.push {
    margin-left: auto;
}

.dots circle {
    fill: #666;
}

.radius-fields {
    display: flex;
    align-items: center;
    gap: 3px;
    margin-left: auto;
    margin-top: 8px;
}

.corners {
    width: 20px;
    height: 20px;
    margin: 0 6px;
    fill: none;
    stroke: #555;
    stroke-width: 2;
}

.radius-fields .num-field:nth-of-type(1) {
    margin-right: 18px;
}

.num-field {
    width: 121px;
    height: 57px;
    padding-left: 26px;
    line-height: 57px;
    background-color: #f5f5f5;
    border-radius: 14px;
    box-shadow: 0 1px 3px rgba(0, 0, 0, 0.04);
}

.segmented {
    display: flex;
    align-items: center;
    width: 201px;
    height: 56px;
    padding: 0 4px;
    background-color: #f5f5f5;
    border-radius: 16px;
}

.segmented span {
    flex: 1;
    text-align: center;
}

.segmented .selected {
    height: 47px;
    line-height: 47px;
    background-color: #fff;
    border-radius: 14px;
}
```
